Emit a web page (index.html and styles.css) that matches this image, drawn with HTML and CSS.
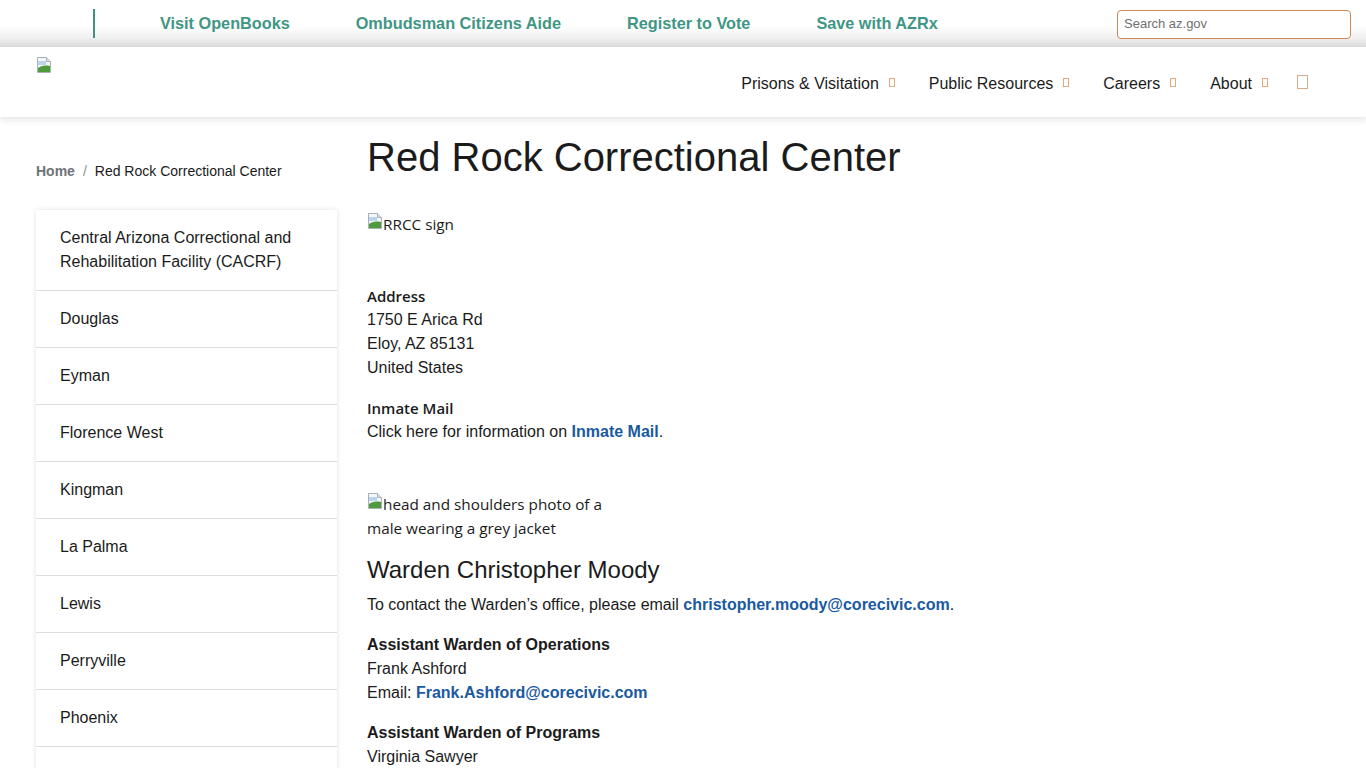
FILE: index.html
```html
<!DOCTYPE html>
<html lang="en">
<head>
<meta charset="utf-8">
<title>Red Rock Correctional Center</title>
<link rel="stylesheet" href="styles.css">
</head>
<body>
<div class="topbar">
  <div class="toplinks">
    <span class="divider"></span>
    <a class="toplink" href="#">Visit OpenBooks</a>
    <a class="toplink" href="#">Ombudsman Citizens Aide</a>
    <a class="toplink" href="#">Register to Vote</a>
    <a class="toplink" href="#">Save with AZRx</a>
  </div>
  <div class="search"><span class="placeholder">Search az.gov</span></div>
</div>
<header class="header">
  <div class="logo"><svg class="broken" width="16" height="16" viewBox="0 0 16 16"><path d="M1.5 0.5h9l4 4v11h-13z" fill="#f4f6f8" stroke="#a8b0b8"/><path d="M10.5 0.5v4h4" fill="#e0e4e8" stroke="#a8b0b8"/><path d="M2 4h8v4H2z" fill="#bcd4ec"/><path d="M2 15V11c3-2 6-3 12-2v6z" fill="#4f9a3c"/></svg></div>
  <nav class="nav">
    <a class="navitem" href="#">Prisons &amp; Visitation<span class="glyph"></span></a>
    <a class="navitem" href="#">Public Resources<span class="glyph"></span></a>
    <a class="navitem" href="#">Careers<span class="glyph"></span></a>
    <a class="navitem" href="#">About<span class="glyph"></span></a>
    <span class="glyph big"></span>
  </nav>
</header>
<div class="page">
  <aside class="side">
    <div class="crumbs"><a class="home" href="#">Home</a><span class="sep">/</span><span>Red Rock Correctional Center</span></div>
    <ul class="menu">
      <li>Central Arizona Correctional and Rehabilitation Facility (CACRF)</li>
      <li>Douglas</li>
      <li>Eyman</li>
      <li>Florence West</li>
      <li>Kingman</li>
      <li>La Palma</li>
      <li>Lewis</li>
      <li>Perryville</li>
      <li>Phoenix</li>
      <li>&nbsp;</li>
    </ul>
  </aside>
  <main class="main">
    <h1 class="title">Red Rock Correctional Center</h1>
    <div class="alt sign"><svg class="broken" width="16" height="16" viewBox="0 0 16 16"><path d="M1.5 0.5h9l4 4v11h-13z" fill="#f4f6f8" stroke="#a8b0b8"/><path d="M10.5 0.5v4h4" fill="#e0e4e8" stroke="#a8b0b8"/><path d="M2 4h8v4H2z" fill="#bcd4ec"/><path d="M2 15V11c3-2 6-3 12-2v6z" fill="#4f9a3c"/></svg>RRCC sign</div>
    <div class="block address">
      <div class="label">Address</div>
      <div>1750 E Arica Rd</div>
      <div>Eloy, AZ 85131</div>
      <div>United States</div>
    </div>
    <div class="block mail">
      <div class="label">Inmate Mail</div>
      <div>Click here for information on <a class="link" href="#">Inmate Mail</a>.</div>
    </div>
    <div class="alt photo"><svg class="broken" width="16" height="16" viewBox="0 0 16 16"><path d="M1.5 0.5h9l4 4v11h-13z" fill="#f4f6f8" stroke="#a8b0b8"/><path d="M10.5 0.5v4h4" fill="#e0e4e8" stroke="#a8b0b8"/><path d="M2 4h8v4H2z" fill="#bcd4ec"/><path d="M2 15V11c3-2 6-3 12-2v6z" fill="#4f9a3c"/></svg>head and shoulders photo of a male wearing a grey jacket</div>
    <h2 class="warden">Warden Christopher Moody</h2>
    <p class="para">To contact the Warden’s office, please email <a class="link" href="#">christopher.moody@corecivic.com</a>.</p>
    <div class="block">
      <div class="strong">Assistant Warden of Operations</div>
      <div>Frank Ashford</div>
      <div>Email: <a class="link" href="#">Frank.Ashford@corecivic.com</a></div>
    </div>
    <div class="block">
      <div class="strong">Assistant Warden of Programs</div>
      <div>Virginia Sawyer</div>
    </div>
  </main>
</div>
</body>
</html>
```
FILE: styles.css
```css
* { box-sizing: border-box; }
html, body { margin: 0; padding: 0; }
body {
  font-family: "Liberation Sans", Arial, sans-serif;
  font-size: 16px;
  line-height: 24px;
  color: #1b1b1b;
  background: #fff;
  overflow: hidden;
  height: 768px;
}
a { text-decoration: none; }

.topbar {
  height: 47px;
  display: flex;
  align-items: center;
  justify-content: space-between;
  padding: 0 15px 0 93px;
  background: linear-gradient(to bottom, #ffffff 0%, #ffffff 55%, #f0f0f0 80%, #dcdcdc 100%);
}
.toplinks { display: flex; align-items: center; height: 100%; }
.divider { width: 2px; height: 29px; background: #3f9182; margin-right: 65px; margin-top: -1px; }
.toplink {
  color: #3f9684;
  font-weight: bold;
  font-size: 16.25px;
  margin-right: 66px;
  margin-bottom: 1px;
}
.search {
  width: 234px;
  height: 29px;
  border: 1px solid #c98a55;
  border-radius: 4px;
  background: #fff;
  display: flex;
  align-items: center;
  padding-left: 6px;
  margin-top: 1px;
}
.placeholder { font-size: 13px; color: #707070; }

.header {
  height: 70px;
  display: flex;
  justify-content: space-between;
  align-items: flex-start;
  padding: 0 58px 0 36px;
  background: #fff;
  box-shadow: 0 3px 6px rgba(0,0,0,0.10);
  position: relative;
}
.logo { padding-top: 9px; height: 16px; }
.broken { display: inline-block; vertical-align: top; margin-top: 1px; }
.nav { display: flex; align-items: center; height: 100%; padding-top: 4px; }
.navitem { color: #1b1b1b; font-size: 16px; display: flex; align-items: center; margin-right: 34px; }
.glyph {
  display: inline-block;
  width: 6px;
  height: 9px;
  border: 1px solid #e8a97a;
  margin-left: 10px;
  margin-top: -3px;
}
.glyph.big { width: 11px; height: 14px; border-color: #d9a98c; margin-left: -5px; margin-top: -4px; }

.page { display: flex; padding: 0 0 0 36px; }
.side { width: 301px; flex: none; }
.crumbs { margin-top: 41px; font-size: 14px; line-height: 26px; color: #1b1b1b; }
.home { color: #6e7378; font-weight: bold; }
.sep { color: #8a8f94; margin: 0 8px; }
.menu {
  list-style: none;
  margin: 26px 0 0 0;
  padding: 0;
  background: #fff;
  box-shadow: 0 0 5px rgba(0,0,0,0.12);
}
.menu li {
  padding: 16px 24px 16px 24px;
  border-bottom: 1px solid #dedede;
  font-size: 16px;
  line-height: 24px;
  color: #1b1b1b;
}

.main { margin-left: 30px; flex: 1; }
.title {
  font-size: 40px;
  font-weight: normal;
  line-height: 48px;
  margin: 16px 0 0 0;
  color: #1b1b1b;
}
.alt { font-family: "Open Sans", "Noto Sans", sans-serif; font-size: 15.3px; color: #1b1b1b; }
.sign { margin-top: 31px; height: 24px; }
.block { margin-top: 16px; }
.address { margin-top: 49px; }
.mail { margin-top: 17px; }
.label { font-family: "Open Sans", "Noto Sans", sans-serif; font-weight: 600; font-size: 15px; line-height: 23px; }
.link { color: #1a5aa0; font-weight: bold; }
.photo { width: 240px; margin-top: 48px; }
.warden { font-size: 24px; font-weight: normal; line-height: 32px; margin: 14px 0 0 0; }
.para { margin: 7px 0 0 0; }
.strong { font-weight: bold; }
```
